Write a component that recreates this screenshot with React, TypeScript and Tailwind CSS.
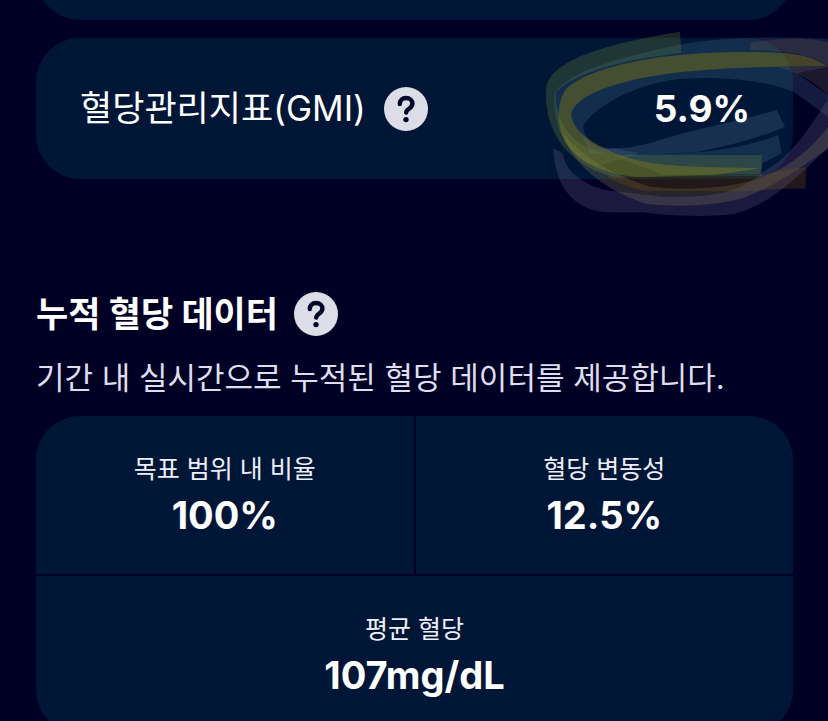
import type { ReactNode } from "react";

type StatProps = {
  label: string;
  value: string;
  className?: string;
};

function HelpButton({ label }: { label: string }) {
  return (
    <button type="button" aria-label={label} className="size-11 shrink-0">
      <svg viewBox="0 0 44 44" className="size-full" aria-hidden="true">
        <circle cx="22" cy="22" r="22" fill="#dddde8" />
        <path
          d="M15.8 17C15.8 13.2 18.4 11 22 11C25.8 11 28.4 13.3 28.4 16.5C28.4 19.2 26.8 20.4 25 21.7C23.2 23 22.2 23.9 22.2 25.6"
          fill="none"
          stroke="#00062a"
          strokeWidth="4.4"
          strokeLinecap="round"
          strokeLinejoin="round"
        />
        <circle cx="22" cy="32.6" r="2.7" fill="#00062a" />
      </svg>
    </button>
  );
}

function Stat({ label, value, className = "" }: StatProps) {
  return (
    <div
      className={`flex flex-col items-center bg-[#001636] pt-9 pb-[34px] ${className}`}
    >
      <dt className="text-[25px] leading-[34px] text-[#eeeef8]">{label}</dt>
      <dd className="mt-1 text-[38px] leading-[50px] font-bold">{value}</dd>
    </div>
  );
}

// Highlighter scribble around the GMI value
function Highlight() {
  return (
    <svg
      viewBox="0 0 894 630"
      className="pointer-events-none absolute -top-[18px] -right-[35px] h-[210px] w-[298px]"
      fill="none"
      aria-hidden="true"
    >
      <filter id="marker-edge">
        <feGaussianBlur stdDeviation="2" />
      </filter>
      <g filter="url(#marker-edge)">
        {/* bluish wash over the top and the left */}
        <path
          d="M894 56C720 48 560 52 450 74C300 105 130 145 75 215C65 300 95 400 200 440L330 400L250 385C190 385 160 350 160 318C200 250 330 192 440 178C560 168 680 175 790 215L894 290L894 225L800 160L894 140Z"
          fill="#4f7490"
          fillOpacity="0.24"
        />
        {/* two flat strokes below the value */}
        <path
          d="M160 350C190 385 220 388 250 385C320 385 370 365 440 345C510 325 600 310 740 270L765 320C690 352 600 378 505 395L300 408L180 400Z"
          fill="#4f7490"
          fillOpacity="0.28"
        />
        <path
          d="M250 408L505 397C600 388 680 370 745 345L755 400L698 430L690 462L400 464Z"
          fill="#4f7490"
          fillOpacity="0.26"
        />
        {/* green stroke */}
        <path
          d="M450 35L454 98C330 114 160 140 78 215C72 300 130 405 270 405L695 405L695 468L250 470C120 440 45 340 48 220C40 130 200 75 450 35Z"
          fill="#6a8a3c"
          fillOpacity="0.28"
        />
        {/* yellow loop */}
        <path
          d="M890 138C850 108 800 100 740 98C620 92 500 98 400 110C280 126 160 158 110 205C76 250 78 330 115 380C155 432 230 464 330 472L560 464L690 445C540 440 400 445 300 415C220 390 122 340 124 280C140 232 210 205 300 182C440 148 640 140 890 138Z"
          fill="#8e8210"
          fillOpacity="0.4"
        />
        {/* tail of the yellow loop, crossing below the card */}
        <path
          d="M100 340C150 410 270 475 360 500C500 515 640 500 720 462C790 430 850 380 894 320L894 385C820 440 740 495 650 530C560 560 430 560 350 552C250 520 130 450 100 340Z"
          fill="#8f8a4e"
          fillOpacity="0.26"
        />
        {/* brown stroke */}
        <path
          d="M230 468L700 466C740 452 790 446 830 442L826 506C740 504 680 514 600 514L340 512C290 500 255 485 230 468Z"
          fill="#6e4f08"
          fillOpacity="0.3"
        />
        {/* violet loop */}
        <path
          d="M70 385C75 500 130 575 240 577L340 577C430 590 560 592 620 580C730 548 800 470 894 385L894 240C850 300 800 400 700 455C640 510 560 535 400 530L225 510C150 490 105 450 98 400Z"
          fill="#6c6488"
          fillOpacity="0.26"
        />
        {/* second pass along the right edge */}
        <path
          d="M660 68C780 48 850 58 894 66L894 225C860 196 820 160 740 142L894 138C860 112 800 92 660 90Z"
          fill="#6e5848"
          fillOpacity="0.26"
        />
      </g>
    </svg>
  );
}

function SectionHeading({ children }: { children: ReactNode }) {
  return (
    <h2 className="text-[35px] leading-[44px] font-bold">{children}</h2>
  );
}

export default function App() {
  return (
    <main
      lang="ko"
      className="h-screen overflow-hidden bg-[#000024] pr-[35px] pl-9 font-['Inter','Noto_Sans_CJK_KR',sans-serif] text-white"
    >
      {/* Tail of the previous card */}
      <div className="-mt-[120px] h-[140px] rounded-[44px] bg-[#001636]" />

      <section className="relative mt-[18px] flex items-center justify-between rounded-[44px] bg-[#001636] py-12 pr-[43px] pl-11">
        <Highlight />
        <div className="flex items-center gap-[18px]">
          <h2 className="text-[35px] leading-[45px]">혈당관리지표(GMI)</h2>
          <HelpButton label="혈당관리지표 도움말" />
        </div>
        <p className="relative text-[37px] leading-[45px] font-bold">5.9%</p>
      </section>

      <section className="mt-[113px]">
        <div className="flex items-center gap-4">
          <SectionHeading>누적 혈당 데이터</SectionHeading>
          <HelpButton label="누적 혈당 데이터 도움말" />
        </div>
        <p className="mt-5 text-[31px] leading-[44px] text-[#dedeef]">
          기간 내 실시간으로 누적된 혈당 데이터를 제공합니다.
        </p>
        <dl className="mt-4 grid grid-cols-2 gap-[2px] overflow-hidden rounded-[44px]">
          <Stat label="목표 범위 내 비율" value="100%" />
          <Stat label="혈당 변동성" value="12.5%" />
          <Stat label="평균 혈당" value="107mg/dL" className="col-span-2" />
        </dl>
      </section>
    </main>
  );
}
